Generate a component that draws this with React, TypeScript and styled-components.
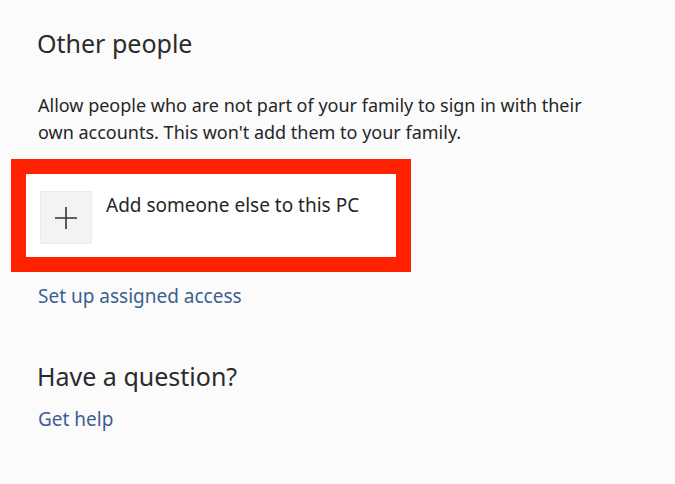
import React from "react";
import styled, { createGlobalStyle } from "styled-components";

const Global = createGlobalStyle`
  html, body { margin: 0; padding: 0; background: #fbfbfb; }
  body { font-family: "Noto Sans", "Open Sans", sans-serif; color: #262626; }
`;

const Page = styled.div`
  width: 675px;
  height: 484px;
  box-sizing: border-box;
  padding: 26px 0 0 37px;
  display: flex;
  flex-direction: column;
  overflow: hidden;
`;

const Heading = styled.h2<{ $top?: number }>`
  margin: ${(p) => p.$top ?? 0}px 0 0 0;
  font-size: 25px;
  font-weight: 400;
  line-height: 34px;
  color: #2b2b2b;
`;

const Description = styled.p`
  margin: 32px 0 0 1px;
  font-size: 18px;
  line-height: 27px;
  color: #262626;
`;

const Highlight = styled.div`
  margin: 13px 0 0 -26px;
  width: 400px;
  height: 113px;
  box-sizing: border-box;
  border: 15px solid #ff2200;
  background: #ffffff;
  display: flex;
  align-items: flex-start;
  padding: 17px 0 0 14px;
  gap: 14px;
`;

const IconTile = styled.div`
  width: 52px;
  height: 53px;
  background: #f3f3f3;
  border: 1px solid #ececec;
  box-sizing: border-box;
  display: flex;
  align-items: center;
  justify-content: center;
`;

const ItemLabel = styled.span`
  font-size: 19px;
  line-height: 26px;
  color: #262626;
  margin-top: 1px;
`;

const Link = styled.a<{ $top: number }>`
  display: block;
  margin: ${(p) => p.$top}px 0 0 1px;
  font-size: 19px;
  line-height: 26px;
  color: #3d5f90;
  text-decoration: none;
`;

export default function App() {
  return (
    <>
      <Global />
      <Page>
        <Heading>Other people</Heading>
        <Description>
          Allow people who are not part of your family to sign in with their
          <br />
          own accounts. This won't add them to your family.
        </Description>
        <Highlight>
          <IconTile>
            <svg width="24" height="24" viewBox="0 0 24 24">
              <path d="M12 1v22M1 12h22" stroke="#333" strokeWidth="1.6" fill="none" />
            </svg>
          </IconTile>
          <ItemLabel>Add someone else to this PC</ItemLabel>
        </Highlight>
        <Link $top={11}>Set up assigned access</Link>
        <Heading $top={50}>Have a question?</Heading>
        <Link $top={13}>Get help</Link>
      </Page>
    </>
  );
}
